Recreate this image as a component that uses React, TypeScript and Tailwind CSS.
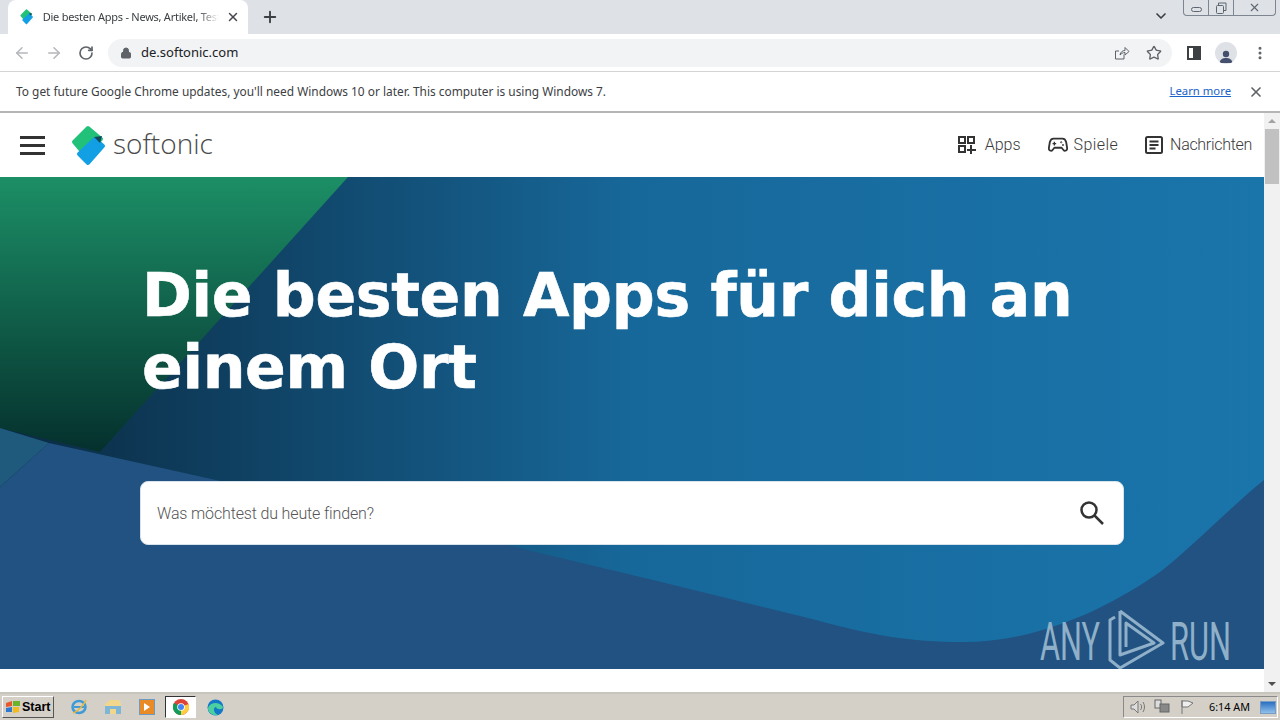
import React from "react";
import {
  ArrowLeft,
  ArrowRight,
  RotateCw,
  Lock,
  Star,
  X,
  Plus,
  ChevronDown,
  MoreVertical,
} from "lucide-react";

const uiFont = "font-['Noto_Sans',sans-serif]";

const SoftonicLogo = ({ height }: { height: number }) => (
  <svg width={(height * 36) / 42} height={height} viewBox="0 0 36 42" strokeLinejoin="round">
    <path d="M17 3 L30 14 L14 30 L3 17 Z" fill="#22c17a" stroke="#22c17a" strokeWidth="4" />
    <path d="M24 14 L32 21 L17 38 L8 29 Z" fill="#129fe4" stroke="#129fe4" strokeWidth="4" />
    <path d="M23 12 L31 11 L29 18 Z" fill="#0f4a5c" />
  </svg>
);

const ChromeIcon = () => (
  <svg width="16" height="16" viewBox="0 0 16 16">
    <circle cx="8" cy="8" r="8" fill="#db4437" />
    <path d="M8 8 L1 4 A8 8 0 0 0 8 16 Z" fill="#0f9d58" />
    <path d="M8 8 L15.5 5 A8 8 0 0 1 8 16 Z" fill="#ffcd40" />
    <circle cx="8" cy="8" r="3.8" fill="#fff" />
    <circle cx="8" cy="8" r="3" fill="#4285f4" />
  </svg>
);

const AnyRunLogo = () => (
  <svg width="196" height="64" viewBox="0 0 196 64">
    <text x="2" y="53" fontFamily="Roboto, sans-serif" fontSize="53" fill="#8fb0c8" textLength="60" lengthAdjust="spacingAndGlyphs">ANY</text>
    <text x="132" y="53" fontFamily="Roboto, sans-serif" fontSize="53" fill="#8fb0c8" textLength="61" lengthAdjust="spacingAndGlyphs">RUN</text>
    <path d="M82 4 L125 36 L82 61 L72 53 L72 13 L77 10 M82 4 V48 L116 36 L88 16 V40" fill="none" stroke="#8fb0c8" strokeWidth="3" strokeLinejoin="round" />
  </svg>
);

const TabStrip = () => (
  <div className="flex h-[34px] shrink-0 bg-[#dee1e6]">
    <div className="ml-2 flex h-[34px] w-[240px] items-center rounded-t-lg bg-white pl-3 pr-2">
      <SoftonicLogo height={16} />
      <span className={`ml-[9px] w-[176px] overflow-hidden whitespace-nowrap text-[11px] tracking-[-0.25px] text-[#3c4043] [mask-image:linear-gradient(to_right,black_88%,transparent)] ${uiFont}`}>
        Die besten Apps - News, Artikel, Tests
      </span>
      <X size={14} strokeWidth={2.5} className="ml-auto text-[#45494d]" />
    </div>
    <Plus size={18} strokeWidth={2.5} className="ml-[13px] mt-2 text-[#3c4043]" />
    <ChevronDown size={16} strokeWidth={2.5} className="ml-[874px] mt-2 text-[#3c4043]" />
    <div className="ml-[14px] flex h-4 w-[93px] rounded-b border border-t-0 border-[#7c8590] text-[#5d6670]">
      <div className="flex w-[25px] items-center justify-center border-r border-[#7c8590]">
        <div className="mt-[3px] h-[5px] w-[11px] rounded-sm border border-[#5d6670]" />
      </div>
      <div className="flex w-[25px] items-center justify-center border-r border-[#7c8590]">
        <svg width="12" height="12" viewBox="0 0 12 12" fill="none" stroke="#5d6670">
          <rect x="1.5" y="3.5" width="7" height="8" rx="1" />
          <path d="M3.500 3.500 V1 H11 V8.500 H8.500" />
        </svg>
      </div>
      <div className="flex flex-1 items-center justify-center">
        <X size={13} />
      </div>
    </div>
  </div>
);

const Toolbar = () => (
  <div className="flex h-[38px] shrink-0 items-center border-b border-[#d4d4d4] bg-white">
    <ArrowLeft size={18} className="ml-[13px] text-[#b4b6ba]" />
    <ArrowRight size={18} className="ml-[14px] text-[#b4b6ba]" />
    <RotateCw size={16} strokeWidth={2.5} className="ml-[15px] text-[#5f6368]" />
    <div className="ml-[14px] flex h-7 w-[1064px] items-center rounded-full bg-[#f1f3f4] pl-[12px] pr-[10px]">
      <Lock size={12} fill="#5f6368" className="text-[#5f6368]" />
      <span className={`ml-[9px] text-[13px] text-[#202124] ${uiFont}`}>de.softonic.com</span>
      <svg width="16" height="16" viewBox="0 0 16 16" className="ml-auto" fill="none" stroke="#5f6368" strokeWidth="1">
        <path d="M10 9.5 V14 H1.5 V6 H5 M6 10 C6.5 7 8.500 5.500 11 5.500 V2.500 L15 6.500 L11 10 V7.500 C9 7.500 7.500 8.500 6 10 Z" />
      </svg>
      <Star size={16} strokeWidth={2} className="ml-4 text-[#5f6368]" />
    </div>
    <div className="ml-[15px] flex h-[14px] w-[14px] justify-end border-2 border-[#3c4043]">
      <div className="h-full w-[6px] bg-[#3c4043]" />
    </div>
    <div className="ml-[14px] flex h-[22px] w-[22px] items-end justify-center overflow-hidden rounded-full bg-[#dee1e6]">
      <svg width="14" height="15" viewBox="0 0 14 15" fill="#45506e">
        <circle cx="7" cy="5" r="3.200" />
        <path d="M0.500 14 C1 10 4 9 7 9 C10 9 13 10 13.500 14 Z" />
      </svg>
    </div>
    <MoreVertical size={16} strokeWidth={2.5} className="ml-[15px] text-[#5f6368]" />
  </div>
);

const InfoBar = () => (
  <div className={`flex h-[41px] shrink-0 items-center border-b-2 border-[#b5b5b5] bg-white pl-4 pr-[16px] text-[11.9px] text-[#3c4043] ${uiFont}`}>
    <span>To get future Google Chrome updates, you'll need Windows 10 or later. This computer is using Windows 7.</span>
    <a className="ml-auto text-[11.3px] text-[#1a63c9] underline">Learn more</a>
    <X size={16} strokeWidth={2.5} className="ml-[17px] text-[#5f6368]" />
  </div>
);

const SiteHeader = () => (
  <header className="flex h-16 shrink-0 items-center bg-white pl-5 pr-3 font-['Roboto',sans-serif] font-light text-[#3a3a3a]">
    <div className="flex w-[25px] flex-col gap-[5px]">
      <div className="h-[3px] bg-[#333]" />
      <div className="h-[3px] bg-[#333]" />
      <div className="h-[3px] bg-[#333]" />
    </div>
    <div className="ml-[26px] mt-[1px]">
      <SoftonicLogo height={42} />
    </div>
    <span className="ml-[6px] mb-1 font-['Open_Sans',sans-serif] text-[28px] text-[#4a4a4a]">softonic</span>
    <nav className="ml-auto flex items-center text-[16px]">
      <svg width="20" height="20" viewBox="0 0 20 20" fill="none" stroke="#333" strokeWidth="2">
        <rect x="2" y="2" width="6" height="6" />
        <rect x="11" y="2" width="6" height="6" />
        <rect x="2" y="11" width="6" height="6" />
        <path d="M14 10 V19 M10 15 H19" />
      </svg>
      <span className="ml-[8px]">Apps</span>
      <svg width="20" height="18" viewBox="0 0 22 18" fill="none" stroke="#333" strokeWidth="2" strokeLinejoin="round" className="ml-[27px]">
        <path d="M6 2 H16 C18.500 2 19.500 4 20 6 L21 12 C21.500 15 18.500 16.500 17 14.500 L15 12 H7 L5 14.500 C3.500 16.500 0.500 15 1 12 L2 6 C2.500 4 3.500 2 6 2 Z" />
        <path d="M7 5.500 V9.500 M5 7.500 H9" strokeWidth="1.500" />
        <circle cx="14.500" cy="6" r="0.700" strokeWidth="1" />
        <circle cx="16.500" cy="9" r="0.700" strokeWidth="1" />
      </svg>
      <span className="ml-[6px] tracking-[0.4px]">Spiele</span>
      <svg width="20" height="20" viewBox="0 0 20 20" fill="none" stroke="#333" strokeWidth="2" className="ml-[26px]">
        <rect x="2" y="2" width="16" height="16" rx="1.500" />
        <path d="M5.500 6.500 H14.500 M5.500 10 H14.500 M5.500 13.500 H11.500" />
      </svg>
      <span className="ml-[6px] tracking-[-0.3px]">Nachrichten</span>
    </nav>
  </header>
);

const Hero = () => (
  <section className="relative h-[492px] shrink-0 overflow-hidden bg-gradient-to-r from-[#0a2a42] via-[#17689a] via-50% to-[#1a75ab]">
    <svg className="absolute inset-0" width="1264" height="492" viewBox="0 0 1264 492">
      <defs>
        <linearGradient id="green" x1="0" y1="0" x2="0" y2="1">
          <stop offset="0" stopColor="#1c8f66" />
          <stop offset="1" stopColor="#05302d" />
        </linearGradient>
      </defs>
      <path d="M0 0 H348 L100 275 L0 251 Z" fill="url(#green)" />
      <path d="M0 251 L49 266 L0 310 Z" fill="#1f5a7c" />
      <path d="M0 310 L49 266 L216 303 L506 368 L653 403 L816 443 C870 458 910 465 963 465 C1040 465 1110 430 1160 395 C1190 372 1225 335 1264 303 V492 H0 Z" fill="#215282" />
    </svg>
    <div className="relative pl-[142px] pt-[82px]">
      <h1 className="w-[1000px] font-['DejaVu_Sans',sans-serif] text-[60px] font-bold leading-[72px] tracking-[-0.3px] text-white [-webkit-text-stroke:0.6px_white]">
        Die besten Apps für dich an einem Ort
      </h1>
      <div className="mt-[78px] ml-[-2px] flex h-[64px] w-[984px] items-center rounded-lg border border-[#d8e2ea] bg-white pl-4 pr-[18px] font-['Roboto',sans-serif] font-light text-[#555]">
        <span className="pt-px text-[16px] tracking-[-0.15px]">Was möchtest du heute finden?</span>
        <svg width="26" height="26" viewBox="0 0 26 26" fill="none" stroke="#333" strokeWidth="2.500" className="ml-auto">
          <circle cx="10" cy="10" r="7.500" />
          <path d="M15.500 15.500 L24 24" />
        </svg>
      </div>
    </div>
    <div className="absolute left-[1038px] top-[430px]">
      <AnyRunLogo />
    </div>
  </section>
);

const Scrollbar = () => (
  <div className="relative flex w-4 shrink-0 flex-col bg-[#f1f1f1]">
    <div className="flex h-[16px] items-center justify-center">
      <div className="border-x-[4px] border-b-[4px] border-x-transparent border-b-[#a3a3a3]" />
    </div>
    <div className="mx-px h-[55px] bg-[#c1c1c1]" />
    <div className="mt-auto flex h-[16px] items-center justify-center">
      <div className="border-x-[4px] border-t-[4px] border-x-transparent border-t-[#505050]" />
    </div>
  </div>
);

const Taskbar = () => (
  <div className="flex h-[28px] shrink-0 items-center border-t-2 border-[#c8c5be] bg-[#d4d0c8] font-['Liberation_Sans',sans-serif]">
    <div className="ml-[2px] flex h-[22px] w-[52px] items-center border border-[#555] border-l-white border-t-white bg-[#d4d0c8] text-[12.5px] font-bold">
      <svg width="16" height="14" viewBox="0 0 16 14" className="ml-[2px]">
        <path d="M1 3 L7 1 V6 L1 7 Z" fill="#e8582c" />
        <path d="M8 1 L15 1 V6 L8 6 Z" fill="#6ab42d" />
        <path d="M1 8 L7 7 V12 L1 12 Z" fill="#2e7ad1" />
        <path d="M8 7 L14 7 V12 L8 13 Z" fill="#f4bb1c" />
      </svg>
      <span className="ml-px text-black">Start</span>
    </div>
    <svg width="18" height="18" viewBox="0 0 18 18" className="ml-[16px]" fill="none">
      <ellipse cx="9" cy="9" rx="6.500" ry="6" stroke="#3f9ad6" strokeWidth="2.500" />
      <path d="M4 9 H14" stroke="#3f9ad6" strokeWidth="2" />
      <path d="M3 15 C7 14 14 7 16 2" stroke="#e8b83a" strokeWidth="1.500" />
    </svg>
    <svg width="18" height="16" viewBox="0 0 18 16" className="ml-[16px]">
      <path d="M1 5 L6 1 H15 L17 5 V15 H1 Z" fill="#f0d78c" />
      <path d="M1 7 H17 V15 H12 V10 H6 V15 H1 Z" fill="#7fb5d5" />
    </svg>
    <div className="ml-[17px] flex h-4 w-4 items-center justify-center border border-[#6d9ac4] bg-[#e98a24]">
      <div className="border-y-[4px] border-l-[6px] border-y-transparent border-l-white" />
    </div>
    <div className="ml-[10px] flex h-[22px] w-[31px] items-center justify-center border border-[#333] border-b-white border-r-white bg-white">
      <ChromeIcon />
    </div>
    <svg width="17" height="17" viewBox="0 0 17 17" className="ml-[11px]">
      <circle cx="8.500" cy="8.500" r="8" fill="#1478c8" />
      <path d="M1 9 C3 3 12 2 16 8 C16 11 10 11 9 8 C6 8 6 14 11 16 C6 17 1 14 1 9 Z" fill="#4bd0a0" />
    </svg>
    <div className="ml-auto mr-[2px] flex h-[22px] w-[155px] items-center border border-[#8a8a8a] border-b-white border-r-white pl-[6px] text-[12px] text-black">
      <svg width="16" height="16" viewBox="0 0 16 16" fill="none" stroke="#777">
        <path d="M1 6 H4 L8 2 V14 L4 10 H1 Z" fill="#ddd" />
        <path d="M10.500 5 C12 7 12 9 10.500 11 M13 3 C15 6 15 10 13 13" />
      </svg>
      <svg width="16" height="16" viewBox="0 0 16 16" className="ml-[8px]" fill="#ddd" stroke="#666">
        <rect x="1" y="1" width="6" height="8" />
        <rect x="6" y="5" width="9" height="8" fill="#888" />
      </svg>
      <svg width="16" height="16" viewBox="0 0 16 16" className="ml-[9px]" fill="#eee" stroke="#777">
        <path d="M3 1 V15 M3 2 H9 L14 4 L9 8 H3 Z" />
      </svg>
      <span className={`ml-[14px] whitespace-nowrap text-[10.8px] ${uiFont}`}>6:14 AM</span>
      <div className="ml-auto mr-px h-[13px] w-4 border border-[#7a9cc4] bg-gradient-to-b from-[#2a6fc0] to-[#8fc0ea]" />
    </div>
  </div>
);

export default function App() {
  return (
    <div className="flex h-[720px] w-[1280px] flex-col overflow-hidden bg-white">
      <TabStrip />
      <Toolbar />
      <InfoBar />
      <div className="flex min-h-0 flex-1">
        <main className="flex flex-1 flex-col bg-white">
          <SiteHeader />
          <Hero />
        </main>
        <Scrollbar />
      </div>
      <Taskbar />
    </div>
  );
}
